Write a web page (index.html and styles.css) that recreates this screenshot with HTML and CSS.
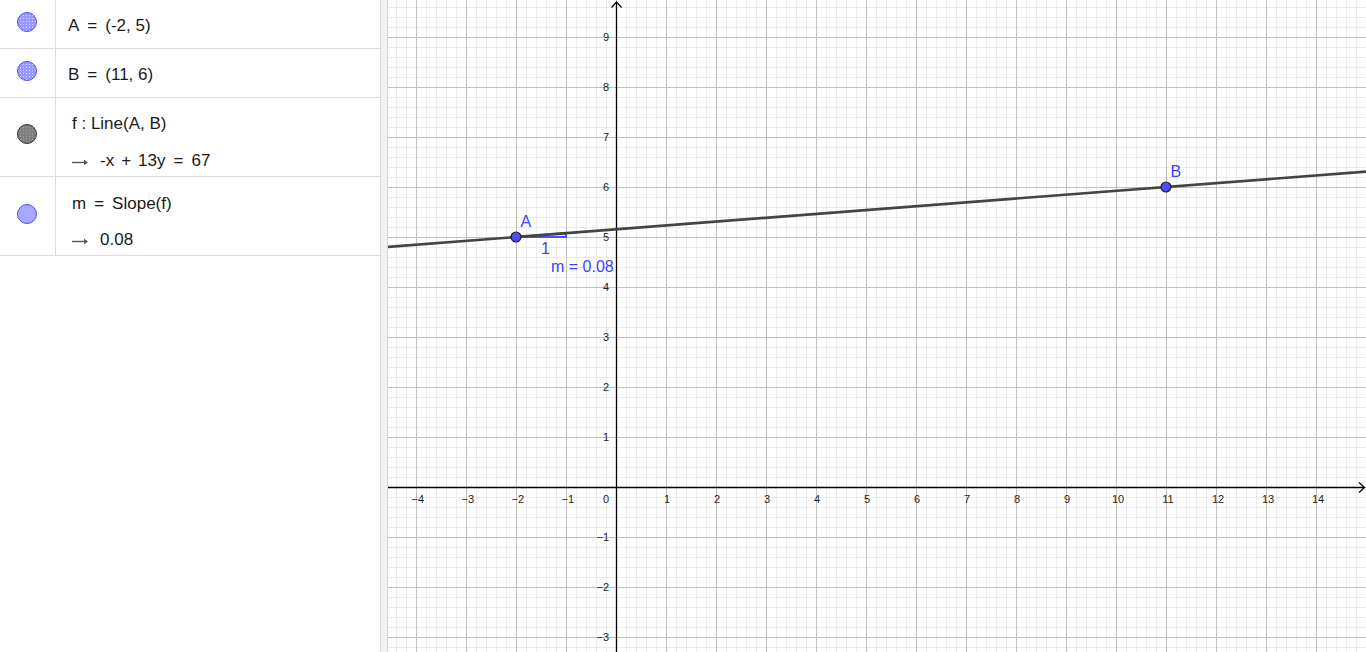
FILE: index.html
```html
<!DOCTYPE html>
<html>
<head>
<meta charset="utf-8">
<link rel="stylesheet" href="styles.css">
</head>
<body>
<div class="app">
  <div class="algebra">
    <div class="row r1">
      <div class="marker">
        <svg class="dot" width="22" height="22" viewBox="0 0 22 22"><defs><pattern id="dots" width="3" height="3" patternUnits="userSpaceOnUse"><rect width="3" height="3" fill="#9999ff"/><rect x="1" y="1" width="1" height="1" fill="#d8d8ff"/></pattern></defs><circle cx="11" cy="11" r="9.5" fill="url(#dots)" stroke="#4d4dff" stroke-width="1"/></svg>
      </div>
      <div class="content"><div class="line l1">A<span class="eq">=</span>(-2, 5)</div></div>
    </div>
    <div class="row r2">
      <div class="marker">
        <svg class="dot" width="22" height="22" viewBox="0 0 22 22"><circle cx="11" cy="11" r="9.5" fill="url(#dots)" stroke="#4d4dff" stroke-width="1"/></svg>
      </div>
      <div class="content"><div class="line l1">B<span class="eq">=</span>(11, 6)</div></div>
    </div>
    <div class="row r3">
      <div class="marker">
        <svg class="dot" width="22" height="22" viewBox="0 0 22 22"><defs><pattern id="gdots" width="3" height="3" patternUnits="userSpaceOnUse"><rect width="3" height="3" fill="#808080"/><rect x="1" y="1" width="1" height="1" fill="#9a9a9a"/></pattern></defs><circle cx="11" cy="11" r="9.5" fill="url(#gdots)" stroke="#333" stroke-width="1"/></svg>
      </div>
      <div class="content two">
        <div class="line def">f : Line(A, B)</div>
        <div class="line out"><svg class="arrow" width="17" height="8" viewBox="0 0 17 8"><path d="M0 4.5 H15" stroke="#555" stroke-width="1.4"/><path d="M12 1.8 L16 4.5 L12 7.2" fill="#555"/></svg><span class="val">-x<span class="op">+</span>13y<span class="eq">=</span>67</span></div>
      </div>
    </div>
    <div class="row r4">
      <div class="marker">
        <svg class="dot" width="22" height="22" viewBox="0 0 22 22"><circle cx="11" cy="11" r="9.5" fill="#a8a8ff" stroke="#4d4dff" stroke-width="1"/></svg>
      </div>
      <div class="content two">
        <div class="line def">m<span class="eq">=</span>Slope(f)</div>
        <div class="line out"><svg class="arrow" width="17" height="8" viewBox="0 0 17 8"><path d="M0 4.5 H15" stroke="#555" stroke-width="1.4"/><path d="M12 1.8 L16 4.5 L12 7.2" fill="#555"/></svg><span class="val">0.08</span></div>
      </div>
    </div>
  </div>
  <div class="splitter"></div>
  <div class="graphics">
    <svg class="plot" width="978" height="652" viewBox="0 0 978 652">
      <defs>
        <pattern id="grid" x="28" y="37" width="50" height="50" patternUnits="userSpaceOnUse">
          <path d="M10.5 0V50M20.5 0V50M30.5 0V50M40.5 0V50M0 10.5H50M0 20.5H50M0 30.5H50M0 40.5H50" stroke="#ebebeb" stroke-width="1"/>
          <path d="M0.5 0V50M0 0.5H50" stroke="#c0c0c0" stroke-width="1"/>
        </pattern>
      </defs>
      <rect width="978" height="652" fill="#fff"/>
      <rect width="978" height="652" fill="url(#grid)"/>
      <path d="M0 487.5H976" stroke="#000" stroke-width="1.3"/>
      <path d="M971 482.5L976.5 487.5L971 492.5" fill="none" stroke="#000" stroke-width="1.2"/>
      <path d="M228.5 652V2" stroke="#000" stroke-width="1.3"/>
      <path d="M223.5 7.5L228.5 2L233.5 7.5" fill="none" stroke="#000" stroke-width="1.2"/>
      <g class="xl" text-anchor="end">
        <text x="36" y="503">−4</text><text x="86" y="503">−3</text><text x="136" y="503">−2</text><text x="186" y="503">−1</text>
        <text x="221" y="503">0</text>
      </g>
      <g class="xl" text-anchor="middle">
        <text x="279" y="503">1</text><text x="329" y="503">2</text><text x="379" y="503">3</text><text x="429" y="503">4</text><text x="479" y="503">5</text><text x="529" y="503">6</text><text x="579" y="503">7</text><text x="629" y="503">8</text><text x="679" y="503">9</text><text x="730" y="503">10</text><text x="780" y="503">11</text><text x="830" y="503">12</text><text x="880" y="503">13</text><text x="930" y="503">14</text>
      </g>
      <g class="xl" text-anchor="end">
        <text x="221" y="41">9</text><text x="221" y="91">8</text><text x="221" y="141">7</text><text x="221" y="191">6</text><text x="221" y="241">5</text><text x="221" y="291">4</text><text x="221" y="341">3</text><text x="221" y="391">2</text><text x="221" y="441">1</text>
        <text x="221" y="541">−1</text><text x="221" y="591">−2</text><text x="221" y="641">−3</text>
      </g>
      <path d="M128 237L178 237L178 233.15Z" fill="rgba(77,77,255,0.15)" stroke="#4d4dff" stroke-width="2"/>
      <path d="M0 246.85L978 171.62" stroke="#444" stroke-width="2.6"/>
      <circle cx="128" cy="237" r="5" fill="#4d4dff" stroke="#222" stroke-width="1.2"/>
      <circle cx="778" cy="187" r="5" fill="#4d4dff" stroke="#222" stroke-width="1.2"/>
      <g class="lab">
        <text x="132.5" y="227">A</text>
        <text x="782.5" y="177">B</text>
        <text x="153" y="254">1</text>
        <text x="163" y="272">m = 0.08</text>
      </g>
    </svg>
  </div>
</div>
</body>
</html>
```

FILE: styles.css
```css
html, body {
  margin: 0;
  padding: 0;
  width: 1366px;
  height: 652px;
  overflow: hidden;
  background: #fff;
}

.app {
  display: flex;
  width: 1366px;
  height: 652px;
}

.algebra {
  width: 380px;
  flex: none;
  display: flex;
  flex-direction: column;
  background: #fff;
  font-family: "Liberation Sans", Arial, sans-serif;
  font-size: 17px;
  color: #1a1a1a;
}

.row {
  display: flex;
  border-bottom: 1px solid #dcdcdc;
}

.r1, .r2 { height: 48px; }
.r3, .r4 { height: 78px; }

.marker {
  width: 56px;
  flex: none;
  border-right: 1px solid #dcdcdc;
  box-sizing: border-box;
  display: flex;
  justify-content: center;
}

.r1 .marker, .r2 .marker { padding-top: 11px; }
.r3 .marker { padding-top: 25px; }
.r4 .marker { padding-top: 26px; }

.dot { display: block; margin-left: -1px; }

.content {
  flex: 1;
  padding-left: 12px;
}

.line {
  height: 20px;
  line-height: 20px;
  white-space: nowrap;
}

.r1 .l1, .r2 .l1 { margin-top: 16px; }

.two { padding-left: 16px; }
.r3 .def { margin-top: 16px; }
.r4 .def { margin-top: 17px; }
.out { margin-top: 17px; display: flex; align-items: center; }
.r4 .out { margin-top: 16px; }

.arrow { display: block; margin-right: 11px; margin-top: 1px; }

.eq { margin: 0 8px; }
.op { margin: 0 7px; }

.splitter {
  width: 8px;
  flex: none;
  box-sizing: border-box;
  background: #f2f2f2;
  border-left: 1px solid #dcdcdc;
  border-right: 1px solid #d4d4d4;
}

.graphics {
  flex: 1;
  height: 652px;
  overflow: hidden;
}

.plot { display: block; }

.xl text {
  font-family: "Liberation Sans", Arial, sans-serif;
  font-size: 11px;
  fill: #1e1e1e;
}

.lab text {
  font-family: "Liberation Sans", Arial, sans-serif;
  font-size: 16px;
  fill: #4040ff;
}
```
